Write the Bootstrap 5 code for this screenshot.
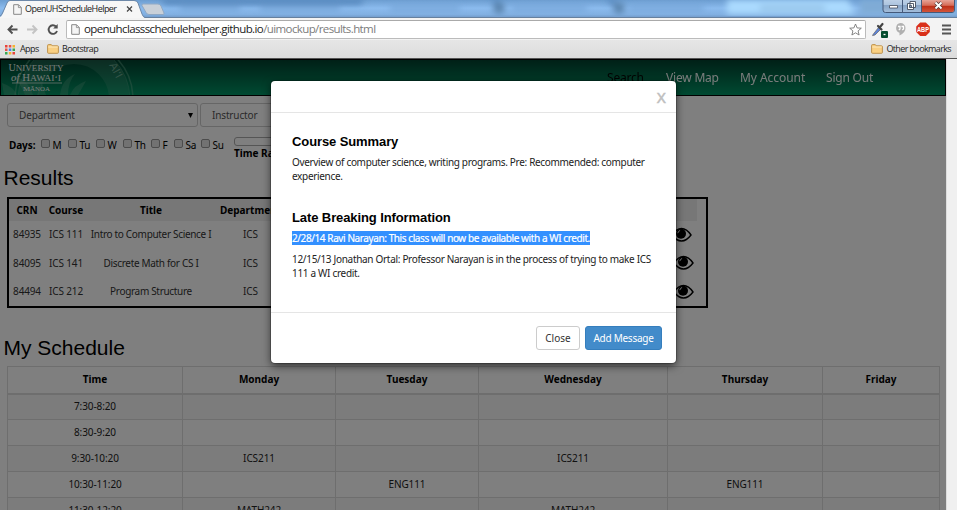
<!DOCTYPE html>
<html lang="en">
<head>
<meta charset="utf-8">
<meta name="viewport" content="width=device-width, initial-scale=1">
<title>OpenUHScheduleHelper</title>
<link href="https://cdn.jsdelivr.net/npm/bootstrap@5.3.0/dist/css/bootstrap.min.css" rel="stylesheet">
<style>
html,body{height:510px;overflow:hidden}
body{font-family:"Noto Sans","Open Sans",sans-serif;font-size:10px;line-height:14px;color:#333;background:#fff}
svg{display:block;flex:none}
.browser-ui{font-family:"Open Sans","Noto Sans",sans-serif;color:#222;white-space:nowrap}
.tabstrip{height:18px;background:linear-gradient(#6c9dd0,#8bbbee 45%,#82b0e2 80%,#6f97c5)}
.tabstrip svg.strip{position:absolute;left:0;top:0}
.tab-label{left:25px;top:2px;font-size:9px;letter-spacing:-.56px}
.toolbar{height:22px;background:#f3f3f3;padding-left:7px}
.omnibox{width:800px;height:19px;background:#fff;border:1px solid #bbb;border-top-color:#aaa;border-radius:2px;margin-left:7px;font-size:11.5px;padding:0 3px 0 4px}
.omnibox .url{letter-spacing:-.6px}
.omnibox .path{color:#7c7c7c}
.bookmarks{height:19px;background:linear-gradient(#e6e6e6,#dcdcdc);border-bottom:1px solid #555;font-size:9px;letter-spacing:-.6px}
.bk-apps{width:19px}
.bk-one{margin-left:3px}
.bk-other{margin:0 6px 0 3px;letter-spacing:-.62px}
.viewport{height:451px;background:#f0f0f0}
.site{width:947px;height:451px;background:#fff;border-right:1px solid #ddd}
.uh-nav{height:37px;background:linear-gradient(#00402e,#009464);border:1px solid #000;font-size:12px}
.uh-nav .nav-word{color:#fff;opacity:.95;top:9px;line-height:18px;white-space:nowrap;letter-spacing:-.2px}
.n1{left:606px}.n2{left:665px}.n3{left:739px}.n4{left:825px}
.uh-nav .n3{letter-spacing:-.05px}
.filters{padding:7px 0 0 7px;gap:2px}
.filter{height:24px;width:191px;border:1px solid #ccc;border-radius:3px;color:#555;padding:0 4px 0 11px;letter-spacing:-.15px}
.days{padding:9px 0 0 9px;height:36px;color:#000}
.d0{width:32px;margin-top:2px;letter-spacing:-.1px}
.day{padding-top:2px;letter-spacing:-.2px}
.tick{width:9px;height:9px;border:1px solid #999;border-radius:2px;background:#e4e4e4;margin:1px 2.500px 0 0}
.day:nth-of-type(1){width:27px}.day:nth-of-type(2){width:28px}.day:nth-of-type(3){width:27px}.day:nth-of-type(4){width:28px}.day:nth-of-type(5){width:23px}.day:nth-of-type(6){width:27px}.day:nth-of-type(7){width:33px}
.slider{width:150px;height:9px;border:1px solid #aaa;border-radius:3px;margin-top:1px}
.site h2{font:21px/24px "Liberation Sans",Arial,sans-serif;color:#000;margin:0}
.site h2.h-results{margin:3px 0 7px 3.500px}
.site h2.h-sched{margin:28px 0 6px 3.500px}
.results{width:701px;height:111px;border:2px solid #000;padding:0 9px 0 0;margin-left:7px}
.results table,.schedule{table-layout:fixed;border-collapse:collapse}
.results table{width:688px}
.results th,.results td{padding:0 0 2px;text-align:center;white-space:nowrap}
.results th{background:#eee;height:22px;color:#000;padding-bottom:1px}
.results td{height:28.5px;letter-spacing:-.14px}
.results td:nth-child(3){letter-spacing:-.32px}
.eye-first{margin-left:5px}.eye-next{margin-left:7px}
.schedule{width:932px;color:#222;margin-left:7px}
.schedule th,.schedule td{height:26px;padding:0 0 2px;text-align:center;border:1px solid #ddd}
.schedule td{letter-spacing:-.1px}
.schedule th{color:#000;border-bottom-width:2px;height:27px;padding-bottom:1px}
.schedule tbody tr:nth-child(odd) td{background:#f9f9f9}
.shade{background:rgba(0,0,0,.5)}
.dialog-box{position:absolute;left:271px;top:22px;width:405px;height:282px;background:#fff;border-radius:4px;box-shadow:0 3px 9px rgba(0,0,0,.6),0 0 0 1px rgba(0,0,0,.2)}
.dialog-box .modal-header{height:32px;padding:0 10px;border-bottom:1px solid #e5e5e5}
.dialog-box .modal-body{padding:21px 21px 0}
.dialog-box h4{font:bold 13px/16px "Liberation Sans",Arial,sans-serif;color:#000;margin:0;letter-spacing:-.1px}
.dialog-box p{white-space:nowrap;letter-spacing:-.325px;color:#222}
.dialog-box p.p-sum{margin:5px 0 27px}
.dialog-box p.p-pick{margin:5px 0 7px;letter-spacing:-.41px}
.dialog-box p.p-late{margin:0;letter-spacing:-.31px}
.dialog-box .modal-footer{height:51px;padding:0 14px;border-top:1px solid #e5e5e5;gap:5px}
.dialog-box .modal-footer>*{margin:0}
.dialog-box .btn{font-size:10px;line-height:14px;height:24px;padding:0;border-radius:3px}
.dialog-box .b-close{width:44px;border:1px solid #ccc;color:#333;background:#fff}
.dialog-box .b-add{width:77px;border:1px solid #357ebd;color:#fff;background:#428bca;letter-spacing:-.25px}
.x-mark{font-size:15px;font-weight:500;color:#c0c0c0;-webkit-text-stroke:.3px #c0c0c0}
.picked{background:#3390ff;color:#fff;-webkit-text-stroke:.2px #fff}
</style>
<script src="https://cdn.jsdelivr.net/npm/bootstrap@5.3.0/dist/js/bootstrap.bundle.min.js"></script>
</head>
<body>
<svg width="0" height="0" class="position-absolute"><defs>
<symbol id="page" viewBox="0 0 9 11"><path d="M.7.7h4.8l2.8 2.8v6.8H.7z" fill="#f5f5f5" stroke="#888"/><path d="M5.4.8v2.8h2.8" fill="none" stroke="#888" stroke-width=".8"/></symbol>
<symbol id="folder" viewBox="0 0 12 10"><path d="M.6 1.5q0-.9.9-.9h2.8l1 1.2h5.2q.9 0 .9.9v5.7q0 .9-.9.9h-9q-.9 0-.9-.9z" fill="#f9cf82" stroke="#b98a43" stroke-width=".9"/><path d="M1.2 3h9.6" stroke="#ffe9bb"/></symbol>
<symbol id="eye" viewBox="0 0 21 15"><path d="M1 8C4 3.5 7 1.5 10.5 1.5S17 3.5 20 8C17 12 14 14 10.500 14S4 12 1 8z" fill="none" stroke="#000" stroke-width="1.400"/><circle cx="10" cy="6.800" r="5" fill="#000"/><path d="M6.800 6.200q.3-2.200 2.300-2.700" stroke="#fff" stroke-width="1" fill="none"/></symbol>
</defs></svg>

<div class="browser-ui">
  <div class="tabstrip position-relative overflow-hidden">
    <svg class="strip" width="957" height="18">
      <defs><filter id="soft"><feGaussianBlur stdDeviation="3"/></filter><linearGradient id="red" x2="0" y2="1"><stop stop-color="#e6a397"/><stop offset=".45" stop-color="#d56c58"/><stop offset=".5" stop-color="#bd2d16"/><stop offset="1" stop-color="#d2553b"/></linearGradient>
      <linearGradient id="glass" x2="0" y2="1"><stop stop-color="#c3d5e9"/><stop offset=".45" stop-color="#aec5df"/><stop offset=".5" stop-color="#86a3c5"/><stop offset="1" stop-color="#a5bfdc"/></linearGradient></defs>
      <g filter="url(#soft)"><path d="M727 0h121l7 14H727z" fill="#aadafe"/><path d="M160 0h205l-5 4H165zM490 0h10v5zM605 0h10v5z" fill="#4779b0"/><circle cx="499" cy="8" r="6" fill="#5a84ae"/><circle cx="619" cy="8" r="6" fill="#5a84ae"/><path d="M180 8h60m20 0h80m50 0h70m52 0h75m42 0h75" stroke="#6f9fd2" stroke-width="4"/><path d="M760 8h65" stroke="#8cb9df" stroke-width="4"/><path d="M860 0h97v14h-97z" fill="#7fabd5"/></g>
      <path d="M0 17.500H957" stroke="#66809e"/>
      <path d="M0 18V17Q2 16 3 13L7 3Q8 .8 10 .8H134Q137 .8 138 3l4 11q1 3 3 4z" fill="#f6f6f6"/><path d="M0 16q2-1 3-4L7 3Q8 .5 10 .5H134Q137 .5 138 3l4 11q1 3 3 3.500" fill="none" stroke="#6d88a8"/>
      <path d="M142 5.500q-.5-1.500 1-1.500h15q2 0 3 2l3 7q.5 1.500-1 1.500h-14q-2 0-3-2z" fill="#c9d0d8" stroke="#8fa8c4"/>
      <use href="#page" x="13" y="4" width="9" height="11"/>
      <path d="M127 6.500l5 5m0-5l-5 5" stroke="#444" stroke-width="1.200"/>
      <path d="M883 -2H954.500V10q0 2.500-2.500 2.500H885.500Q883 12.500 883 10z" fill="url(#glass)" stroke="#44597a"/>
      <path d="M921.500 0H954V10q0 2-2 2H921.500z" fill="url(#red)"/><path d="M902.500 0v12m19-12v12" stroke="#44597a"/>
      <path d="M889.500 5.500h8v2.500h-8z" fill="#fff" stroke="#444d5c" stroke-width=".8"/>
      <path d="M910 1.500h5.500v6H910zM907.500 3.500h6v6h-6z" fill="#fff" stroke="#444d5c" stroke-width=".9"/><path d="M909.500 5.500h2v2h-2z" fill="#8aa5c4" stroke="#444d5c" stroke-width=".8"/>
      <path d="M935.500 2.500l6 6m0-6l-6 6" stroke="#4c3738" stroke-width="3.200"/><path d="M935.500 2.500l6 6m0-6l-6 6" stroke="#fff" stroke-width="1.900"/>
    </svg>
    <span class="tab-label position-absolute">OpenUHScheduleHelper</span>
  </div>
  <div class="toolbar d-flex align-items-center">
    <svg width="52" height="18"><path d="M10.500 9.500H1.500M5.500 5.500l-4 4 4 4" fill="none" stroke="#505050" stroke-width="1.900"/><path d="M20 9.500h9M25.500 5.500l4 4-4 4" fill="none" stroke="#c4c4c4" stroke-width="1.900"/><path d="M49 6.500A4.300 4.300 0 1 0 50 11" fill="none" stroke="#505050" stroke-width="1.900"/><path d="M50.700 4v4.500h-4.500z" fill="#505050"/></svg>
    <div class="omnibox d-flex align-items-center">
      <svg width="9" height="11"><use href="#page"/></svg>
      <span class="url ms-1">openuhclassschedulehelper.github.io<span class="path">/uimockup/results.html</span></span>
      <svg class="ms-auto" width="13" height="13" viewBox="0 0 13 13"><path d="M6.500 1l1.600 3.900 4.200.3-3.200 2.700 1 4.100-3.600-2.200L2.900 12l1-4.100L.7 5.200l4.200-.3z" fill="#fff" stroke="#777" stroke-width=".9"/></svg>
    </div>
    <svg width="85" height="20" viewBox="0 0 85 20"><path d="M7 15.500l5.500-7 2 2-5.500 5.500-2.500.6z" fill="#5d83d8" stroke="#666" stroke-width=".7"/><path d="M12 7l3.500 3.500M14 8l2.500-3" stroke="#444" stroke-width="2.200" stroke-linecap="round"/><rect x="15" y="12" width="7" height="7" rx="1" fill="#064e30"/><path d="M17.500 15.500h2" stroke="#fff" stroke-width="1.300"/>
    <path d="M34.500 4a5 5 0 0 0-1 9.700V16.500Q39.500 14 39.500 9A5 5 0 0 0 34.500 4z" fill="#b0b0b0"/><path d="M32 7.500h2v2.500l-1.200 1M35.500 7.500h2v2.500l-1.200 1" fill="none" stroke="#fff" stroke-width="1.300"/>
    <path d="M54.200 3.500h5.600l4 4v5.600l-4 4h-5.600l-4-4V7.500z" fill="#d9301a"/><text x="57" y="12.800" text-anchor="middle" font-size="7" font-weight="bold" fill="#fff" font-family="Liberation Sans" textLength="12" lengthAdjust="spacingAndGlyphs">ABP</text>
    <path d="M76 6.500h9M76 10.500h9M76 14.500h9" stroke="#555" stroke-width="2"/></svg>
  </div>
  <div class="bookmarks d-flex align-items-center">
    <svg width="20" height="11" viewBox="0 0 20 11"><path d="M5 1h2.500v2.500H5zM12.500 8H15v2.500h-2.500z" fill="#e8443a"/><path d="M8.800 1h2.500v2.500H8.800zM5 4.500h2.500V7H5z" fill="#ea5145"/><path d="M12.500 1H15v2.500h-2.500zM8.800 8h2.500v2.500H8.800z" fill="#f5b12e"/><path d="M8.800 4.500h2.500V7H8.800z" fill="#4285f4"/><path d="M12.500 4.500H15V7h-2.500zM5 8h2.500v2.500H5z" fill="#35a853"/></svg>
    <span class="bk-apps">Apps</span>
    <svg class="ms-2" width="12" height="10"><use href="#folder"/></svg><span class="bk-one">Bootstrap</span>
    <svg class="ms-auto" width="12" height="10"><use href="#folder"/></svg><span class="bk-other">Other bookmarks</span>
  </div>
</div>

<div class="viewport position-relative">
  <div class="site position-relative overflow-hidden">
    <div class="uh-nav d-flex position-relative">
      <svg width="140" height="35" viewBox="1 61 140 35">
        <g fill="none" stroke="#7dbb9e" stroke-opacity=".4"><circle cx="74" cy="100" r="59" stroke-width="1.500"/><circle cx="74" cy="100" r="56" stroke-opacity=".2"/></g>
        <circle cx="74" cy="100" r="45.500" fill="none" stroke="#7dbb9e" stroke-opacity=".2" stroke-width="21"/>
        <path d="M2 84q12 4 15 12H4zM25 96q-5-14-14-19 16 1 22 19zM75 75q-13 5-15 21h8q0-13 7-21zM86 82q-12 4-16 14h8zM42 84l4 12h-9z" fill="#7dbb9e" fill-opacity=".28"/>
        <g fill="#eef8f3" font-family="Liberation Serif"><text x="8.500" y="71.500" font-size="9.500" textLength="55" lengthAdjust="spacingAndGlyphs">U<tspan font-size="8.500">NIVERSITY</tspan></text><text x="11" y="82" font-size="9.500" textLength="50" lengthAdjust="spacingAndGlyphs"><tspan font-style="italic">of</tspan> H<tspan font-size="8.500">AWAI‘I</tspan></text><text x="23" y="92" font-size="7" textLength="27" lengthAdjust="spacingAndGlyphs">M<tspan font-size="6">ĀNOA</tspan></text></g>
        <path d="M12 84h50" stroke="#cfe6db" stroke-width=".8"/>
        <text transform="translate(109 66) rotate(62)" font-family="Liberation Sans" font-size="11" fill="#9fd0b9" fill-opacity=".6">AI‘I</text>
      </svg>
      <span class="nav-word text-black n1 position-absolute">Search</span><span class="nav-word n2 position-absolute">View Map</span><span class="nav-word n3 position-absolute">My Account</span><span class="nav-word n4 position-absolute">Sign Out</span>
    </div>
    <div class="filters d-flex">
      <div class="filter d-flex align-items-center justify-content-between"><span>Department</span><svg width="5" height="5"><path d="M0 0h5L2.500 5z" fill="#000"/></svg></div>
      <div class="filter d-flex align-items-center"><span>Instructor</span></div>
    </div>
    <div class="days d-flex">
      <b class="d0">Days:</b>
      <span class="day d-flex"><i class="tick"></i>M</span><span class="day d-flex"><i class="tick"></i>Tu</span><span class="day d-flex"><i class="tick"></i>W</span><span class="day d-flex"><i class="tick"></i>Th</span><span class="day d-flex"><i class="tick"></i>F</span><span class="day d-flex"><i class="tick"></i>Sa</span><span class="day d-flex"><i class="tick"></i>Su</span>
      <div class="range"><div class="slider"></div><b>Time Range</b></div>
    </div>
    <h2 class="h-results">Results</h2>
    <div class="results">
      <table>
        <colgroup><col width="36"><col width="42"><col width="128"><col width="71"><col width="380"><col width="31"></colgroup>
        <tr><th>CRN</th><th>Course</th><th>Title</th><th>Department</th><th></th><th></th></tr>
        <tr><td>84935</td><td>ICS 111</td><td>Intro to Computer Science I</td><td>ICS</td><td></td><td><svg class="eye-first" width="21" height="15"><use href="#eye"/></svg></td></tr>
        <tr><td>84095</td><td>ICS 141</td><td>Discrete Math for CS I</td><td>ICS</td><td></td><td><svg class="eye-next" width="21" height="15"><use href="#eye"/></svg></td></tr>
        <tr><td>84494</td><td>ICS 212</td><td>Program Structure</td><td>ICS</td><td></td><td><svg class="eye-next" width="21" height="15"><use href="#eye"/></svg></td></tr>
      </table>
    </div>
    <h2 class="h-sched">My Schedule</h2>
    <table class="schedule">
      <colgroup><col width="175"><col width="153"><col width="143"><col width="189"><col width="155"><col width="117"></colgroup>
      <thead><tr><th>Time</th><th>Monday</th><th>Tuesday</th><th>Wednesday</th><th>Thursday</th><th>Friday</th></tr></thead>
      <tbody>
      <tr><td>7:30-8:20</td><td></td><td></td><td></td><td></td><td></td></tr>
      <tr><td>8:30-9:20</td><td></td><td></td><td></td><td></td><td></td></tr>
      <tr><td>9:30-10:20</td><td>ICS211</td><td></td><td>ICS211</td><td></td><td></td></tr>
      <tr><td>10:30-11:20</td><td></td><td>ENG111</td><td></td><td>ENG111</td><td></td></tr>
      <tr><td>11:30-12:20</td><td>MATH242</td><td></td><td>MATH242</td><td></td><td></td></tr>
      </tbody>
    </table>
    <div class="shade position-absolute top-0 start-0 w-100 h-100"></div>
  </div>
  <div class="dialog-box d-flex flex-column">
    <div class="modal-header d-flex align-items-center justify-content-end"><span class="x-mark">X</span></div>
    <div class="modal-body">
      <h4>Course Summary</h4>
      <p class="p-sum">Overview of computer science, writing programs. Pre: Recommended: computer<br>experience.</p>
      <h4>Late Breaking Information</h4>
      <p class="p-pick"><span class="picked">2/28/14 Ravi Narayan: This class will now be available with a WI credit.</span></p>
      <p class="p-late">12/15/13 Jonathan Ortal: Professor Narayan is in the process of trying to make ICS<br>111 a WI credit.</p>
    </div>
    <div class="modal-footer d-flex align-items-center justify-content-end"><button class="btn b-close">Close</button><button class="btn b-add">Add Message</button></div>
  </div>
</div>
</body>
</html>
